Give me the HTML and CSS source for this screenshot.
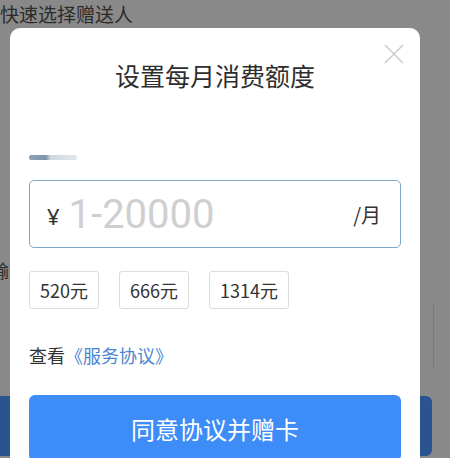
FILE: index.html
```html
<!DOCTYPE html>
<html lang="zh">
<head>
<meta charset="utf-8">
<link rel="stylesheet" href="styles.css">
</head>
<body>
<div class="page">
  <div class="bg-title">快速选择赠送人</div>
  <div class="bg-row"><span class="bg-label">输入</span><span class="bg-rule"></span></div>
  <div class="bg-button"></div>
</div>
<div class="modal">
  <svg class="close" width="20" height="20" viewBox="0 0 20 20"><path d="M1 1L19 19M19 1L1 19" stroke="#cdcdcd" stroke-width="1.6" fill="none"/></svg>
  <h1 class="title">设置每月消费额度</h1>
  <div class="ghost-bar"></div>
  <div class="amount">
    <span class="yen">¥</span>
    <span class="placeholder">1-20000</span>
    <span class="unit">/月</span>
  </div>
  <div class="chips">
    <span class="chip">520元</span>
    <span class="chip">666元</span>
    <span class="chip">1314元</span>
  </div>
  <div class="agreement">查看<a class="link">《服务协议》</a></div>
  <div class="submit">同意协议并赠卡</div>
</div>
</body>
</html>
```
FILE: styles.css
```css
html, body {
  margin: 0;
  padding: 0;
}
body {
  width: 450px;
  height: 458px;
  overflow: hidden;
  background: #898989;
  font-family: "Noto Sans CJK SC", "Noto Sans", sans-serif;
  position: relative;
}
.page {
  display: flex;
  flex-direction: column;
  height: 458px;
}
.bg-title {
  font-size: 19px;
  line-height: 28px;
  color: #2b2b2b;
}
.bg-row {
  display: flex;
  justify-content: space-between;
  margin-top: 230px;
  height: 110px;
}
.bg-label {
  font-size: 18px;
  line-height: 24px;
  color: #2b2b2b;
  margin-left: -9px;
}
.bg-rule {
  width: 1px;
  height: 64px;
  margin-top: 46px;
  margin-right: 16px;
  background: #7a7a7a;
}
.bg-button {
  margin-top: 28px;
  width: 432px;
  height: 60px;
  flex: none;
  background: #2a5490;
  border-radius: 0 6px 6px 0;
}
.modal {
  position: absolute;
  left: 10px;
  top: 28px;
  width: 410px;
  height: 440px;
  background: #fff;
  border-radius: 10px 10px 0 0;
  box-sizing: border-box;
  padding: 0 19px;
  display: flex;
  flex-direction: column;
}
.close {
  position: absolute;
  top: 16px;
  right: 16px;
}
.title {
  margin: 32px 0 0;
  font-size: 25px;
  line-height: 30px;
  font-weight: 400;
  color: #2e2e2e;
  text-align: center;
}
.ghost-bar {
  margin-top: 65px;
  width: 48px;
  height: 5px;
  border-radius: 2px;
  background: linear-gradient(90deg, #8ea2b6 0%, #7f95ab 35%, #cfd7e0 45%, #e3e7ec 100%);
}
.amount {
  margin-top: 20px;
  height: 68px;
  box-sizing: border-box;
  border: 1px solid #7ea6c6;
  border-radius: 5px;
  display: flex;
  align-items: center;
  padding: 0 19px 0 17px;
}
.yen {
  font-family: "Noto Sans", sans-serif;
  font-size: 22px;
  color: #333;
  margin-right: 9px;
  margin-top: 4px;
}
.placeholder {
  font-family: Roboto, sans-serif;
  font-size: 40px;
  color: #cfcfcf;
  flex: 1;
}
.unit {
  font-size: 20px;
  color: #333;
}
.chips {
  margin-top: 23px;
  display: flex;
  gap: 20px;
}
.chip {
  height: 38px;
  box-sizing: border-box;
  border: 1px solid #dcdcdc;
  border-radius: 3px;
  padding: 0 10px;
  display: flex;
  align-items: center;
  font-size: 18px;
  color: #333;
}
.agreement {
  margin-top: 34px;
  font-size: 18px;
  line-height: 24px;
  color: #333;
}
.link {
  color: #4a86d0;
}
.submit {
  margin-top: 28px;
  height: 66px;
  flex: none;
  background: #3d8cf7;
  border-radius: 6px;
  color: #fff;
  font-size: 24px;
  display: flex;
  align-items: center;
  justify-content: center;
}
```
